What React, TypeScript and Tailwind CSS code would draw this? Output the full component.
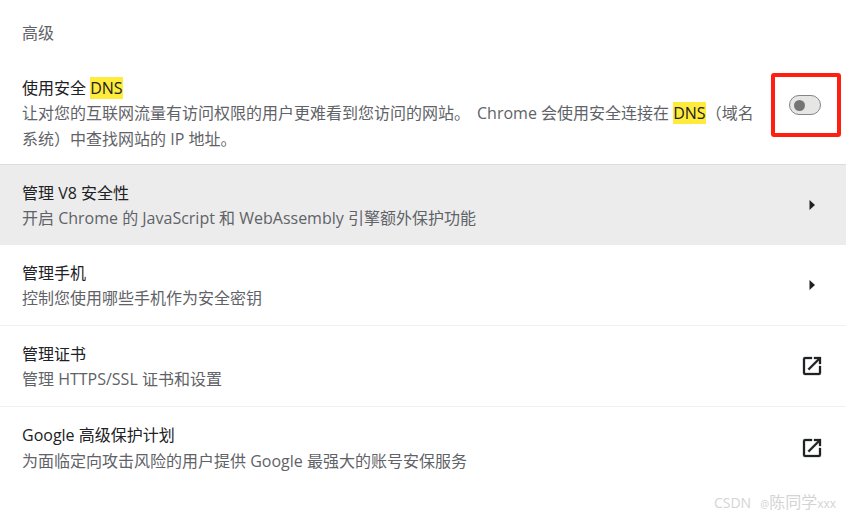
import React from 'react';

const font = { fontFamily: '"Open Sans", "Noto Sans CJK SC", sans-serif' };

const Caret = () => (
  <svg width="8" height="12" viewBox="0 0 8 12" className="block">
    <path d="M1.5 1 L7 6 L1.5 11 Z" fill="#202124" />
  </svg>
);

const External = () => (
  <svg width="24" height="24" viewBox="0 0 24 24" className="block">
    <path
      fill="#202124"
      stroke="#202124"
      strokeWidth="0.3"
      d="M5 5v14h14v-7h2v7a2 2 0 0 1-2 2H5a2 2 0 0 1-2-2V5a2 2 0 0 1 2-2h7v2H5zm9-2h7v7h-2V6.41l-9.83 9.83-1.41-1.41L17.59 5H14V3z"
    />
  </svg>
);

const Mark = ({ children }: { children: React.ReactNode }) => (
  <span className="bg-[#ffeb3b] text-[#202124]">{children}</span>
);

const rows = [
  { title: '管理 V8 安全性', desc: '开启 Chrome 的 JavaScript 和 WebAssembly 引擎额外保护功能', icon: 'caret', hover: true },
  { title: '管理手机', desc: '控制您使用哪些手机作为安全密钥', icon: 'caret' },
  { title: '管理证书', desc: '管理 HTTPS/SSL 证书和设置', icon: 'ext' },
  { title: 'Google 高级保护计划', desc: '为面临定向攻击风险的用户提供 Google 最强大的账号安保服务', icon: 'ext', last: true },
];

const App = () => {
  return (
    <div className="relative w-[846px] h-[520px] overflow-hidden bg-white text-[16px] leading-[26px]" style={font}>
      <div className="h-[66px] pl-[22px] pt-[20px] text-[#5f6368]">高级</div>

      <div className="flex h-[99px] border-b border-[#dcdcdc] pl-[22px] pt-[8px]">
        <div className="w-[736px]">
          <div className="mt-[1px] mb-[-1px] text-[#202124]">
            使用安全 <Mark>DNS</Mark>
          </div>
          <div className="text-[#5f6368]">
            让对您的互联网流量有访问权限的用户更难看到您访问的网站。<span className="ml-[7px]">Chrome</span> 会使用安全连接在 <Mark>DNS</Mark>（域名系统）中查找网站的 IP 地址。
          </div>
        </div>
        <div className="ml-[13px] mt-[-1px] flex h-[64px] w-[70px] items-center justify-center rounded-[3px] border-[4px] border-[#ff1f10]">
          <div className="mr-[2px] flex h-[20px] w-[32px] items-center rounded-full border border-[#80868b] bg-[#e6e6e4] pl-[4px]">
            <div className="h-[11px] w-[11px] rounded-full bg-[#757575]" />
          </div>
        </div>
      </div>

      {rows.map((row) => (
        <div
          key={row.title}
          className={`flex items-center pl-[22px] ${row.hover ? 'h-[80px] bg-[#ececec]' : 'h-[81px]'} ${
            row.hover || row.last ? '' : 'border-b border-[#f0f0f0]'
          }`}
        >
          <div className="flex-1">
            <div className={`text-[#202124] ${row.last ? '' : 'mt-[1px] mb-[-1px]'}`}>{row.title}</div>
            <div className="text-[#5f6368]">{row.desc}</div>
          </div>
          {row.icon === 'caret' ? (
            <div className="mr-[30px]">
              <Caret />
            </div>
          ) : (
            <div className="mr-[22px]">
              <External />
            </div>
          )}
        </div>
      ))}

      <div className="absolute right-[10px] bottom-[3px] flex items-baseline text-[#d4d4d4]">
        <span className="text-[14px]">CSDN</span>
        <span className="ml-[9px] text-[10px]">@</span>
        <span className="text-[16px]">陈同学</span>
        <span className="text-[12px]">xxx</span>
      </div>
    </div>
  );
};

export default App;
